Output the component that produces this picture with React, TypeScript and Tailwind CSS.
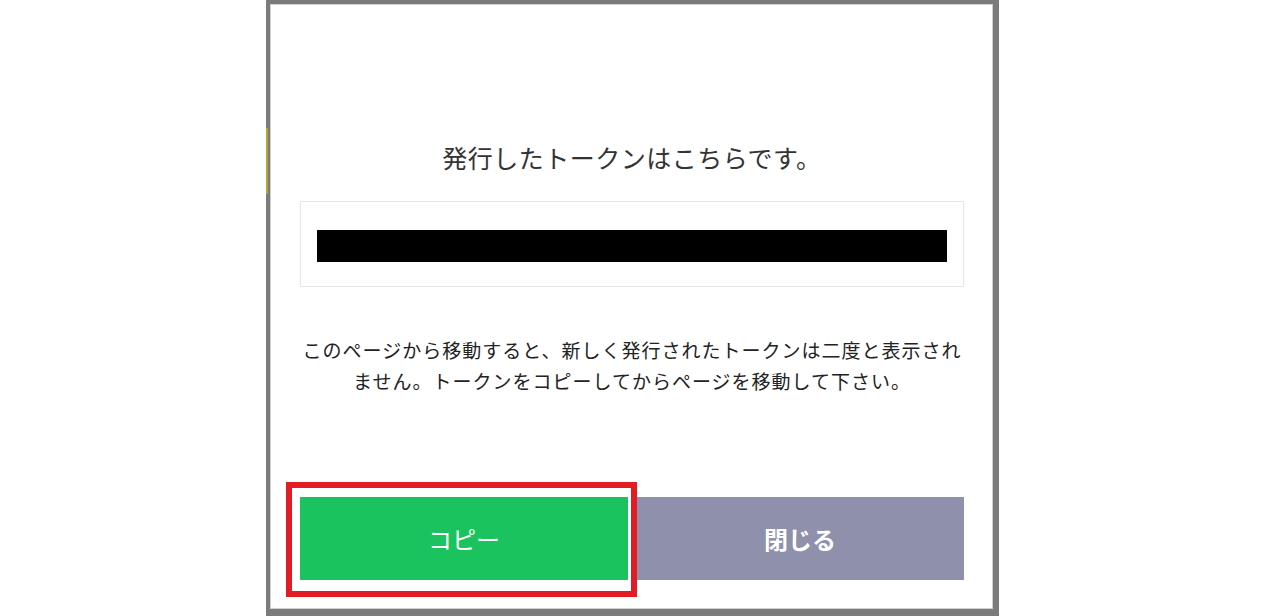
import React from 'react';

const font = { fontFamily: '"Noto Sans CJK JP", "Noto Sans", sans-serif' };

const TokenDialog: React.FC = () => {
  return (
    <div className="relative ml-[266px] h-[616px] w-[733px] border-l-4 border-t-4 border-r-[6px] border-b-[7px] border-[#7b7b7b]">
      {/* yellowish streak on the left edge */}
      <div className="absolute -left-1 top-[124px] h-[66px] w-[2px] bg-[#b8a630]" />
      <div className="h-full border border-[#cfcfcf] bg-white pl-[29px] pr-[28px] pt-[136px]">
        <h2 className="text-center text-[25px] leading-[32px] tracking-[0.5px] text-[#333]">発行したトークンはこちらです。</h2>

        <div className="mt-[28px] h-[86px] border border-[#e6e6e6] px-4 pt-[28px]">
          <div className="h-[32px] w-full bg-black" />
        </div>

        <p className="mt-[47px] text-center text-[19px] leading-[31px] tracking-[1px] text-[#222]">
          このページから移動すると、新しく発行されたトークンは二度と表示され
          <br />
          ません。トークンをコピーしてからページを移動して下さい。
        </p>

        <div className="relative mt-[101px] grid grid-cols-2 gap-2">
          <button className="h-[83px] bg-[#1bc35f] text-[24px] text-white">コピー</button>
          <button className="h-[83px] bg-[#8e90ac] text-[24px] font-bold text-white">閉じる</button>
          {/* red highlight annotation */}
          <div className="pointer-events-none absolute -left-[14px] -top-[15px] h-[115px] w-[351px] border-[6px] border-[#e31b23]" />
        </div>
      </div>
    </div>
  );
};

export default function App() {
  return (
    <div className="h-[616px] w-[1266px] overflow-hidden bg-white" style={font}>
      <TokenDialog />
    </div>
  );
}
